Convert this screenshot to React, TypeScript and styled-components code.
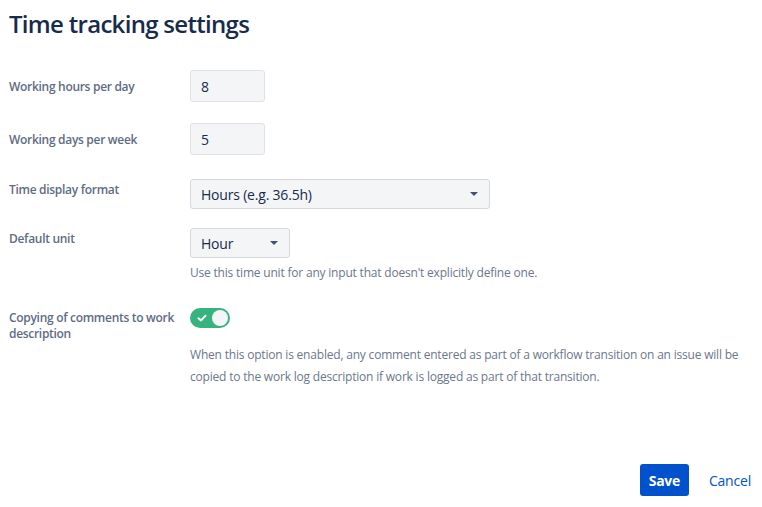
import React from "react";
import styled, { createGlobalStyle } from "styled-components";

const Global = createGlobalStyle`
  html, body { margin: 0; padding: 0; background: #fff; }
  body { font-family: "Open Sans", "Noto Sans", sans-serif; color: #172b4d; }
  * { box-sizing: border-box; }
`;

const Page = styled.div`
  width: 762px;
  height: 507px;
  padding: 10px 9px 0 9px;
  display: flex;
  flex-direction: column;
`;

const Title = styled.h1`
  margin: 0;
  font-size: 24px;
  line-height: 28px;
  font-weight: 600;
  color: #172b4d;
  letter-spacing: -0.7px;
`;

const Form = styled.div`
  margin-top: 32px;
  display: grid;
  grid-template-columns: 181px 1fr;
  align-items: start;
`;

const Label = styled.div<{ $top: number; $mt: number }>`
  padding-top: ${(p) => p.$top}px;
  margin-top: ${(p) => p.$mt}px;
  font-size: 12px;
  line-height: 16px;
  font-weight: 600;
  color: #5e6c84;
  letter-spacing: -0.3px;
  width: 176px;
`;

const Field = styled.div<{ $mt: number }>`
  margin-top: ${(p) => p.$mt}px;
  display: flex;
  flex-direction: column;
  align-items: flex-start;
`;

const TextInput = styled.div`
  width: 75px;
  height: 32px;
  background: #f4f5f7;
  border: 1px solid #dfe1e6;
  border-radius: 3px;
  padding: 0 10px;
  display: flex;
  align-items: center;
  font-size: 14px;
  color: #172b4d;
`;

const Select = styled.div<{ $w: number }>`
  width: ${(p) => p.$w}px;
  height: 30px;
  background: #f4f5f7;
  border: 1px solid #d5d8de;
  border-radius: 3px;
  padding: 0 10px;
  display: flex;
  align-items: center;
  justify-content: space-between;
  font-size: 14px;
  letter-spacing: -0.2px;
  color: #172b4d;
`;

const Caret = styled.span`
  width: 0;
  height: 0;
  border-left: 4px solid transparent;
  border-right: 4px solid transparent;
  border-top: 4px solid #42526e;
  margin-right: 1px;
`;

const Help = styled.p<{ $mt: number; $lh: number }>`
  margin: ${(p) => p.$mt}px 0 0 0;
  font-size: 12px;
  line-height: ${(p) => p.$lh}px;
  color: #6b778c;
  letter-spacing: -0.2px;
  max-width: 560px;
`;

const Toggle = styled.div`
  width: 40px;
  height: 20px;
  border-radius: 10px;
  background: #36b37e;
  position: relative;
  display: flex;
  align-items: center;
  padding: 0 2px 0 7px;
`;

const Knob = styled.span`
  position: absolute;
  right: 2px;
  top: 2px;
  width: 16px;
  height: 16px;
  border-radius: 50%;
  background: #f4f5f7;
`;

const Footer = styled.div`
  margin-top: auto;
  margin-bottom: 11px;
  margin-right: -8px;
  display: flex;
  justify-content: flex-end;
  align-items: center;
  gap: 10px;
`;

const Primary = styled.button`
  height: 32px;
  width: 49px;
  padding: 0;
  border: none;
  border-radius: 3px;
  background: #0052cc;
  color: #fff;
  font-family: inherit;
  font-size: 14px;
  font-weight: 700;
  letter-spacing: -0.3px;
`;

const Link = styled.button`
  height: 32px;
  padding: 0 10px;
  border: none;
  background: transparent;
  color: #0052cc;
  font-family: inherit;
  font-size: 14px;
  letter-spacing: -0.2px;
`;

export default function App() {
  return (
    <>
      <Global />
      <Page>
        <Title>Time tracking settings</Title>
        <Form>
          <Label $top={9} $mt={0}>Working hours per day</Label>
          <Field $mt={0}>
            <TextInput>8</TextInput>
          </Field>

          <Label $top={9} $mt={21}>Working days per week</Label>
          <Field $mt={21}>
            <TextInput>5</TextInput>
          </Field>

          <Label $top={3} $mt={24}>Time display format</Label>
          <Field $mt={24}>
            <Select $w={300}>
              <span>Hours (e.g. 36.5h)</span>
              <Caret />
            </Select>
          </Field>

          <Label $top={3} $mt={19}>Default unit</Label>
          <Field $mt={19}>
            <Select $w={100}>
              <span>Hour</span>
              <Caret />
            </Select>
            <Help $mt={7} $lh={16}>
              Use this time unit for any input that doesn't explicitly define one.
            </Help>
          </Field>

          <Label $top={2} $mt={27}>Copying of comments to work description</Label>
          <Field $mt={27}>
            <Toggle>
              <svg width="10" height="10" viewBox="0 0 10 10">
                <path d="M1.5 5.2 L4 7.4 L8.5 2.8" fill="none" stroke="#fff" strokeWidth="2" strokeLinecap="round" strokeLinejoin="round" />
              </svg>
              <Knob />
            </Toggle>
            <Help $mt={16} $lh={22}>
              When this option is enabled, any comment entered as part of a workflow transition on an issue will be
              copied to the work log description if work is logged as part of that transition.
            </Help>
          </Field>
        </Form>
        <Footer>
          <Primary>Save</Primary>
          <Link>Cancel</Link>
        </Footer>
      </Page>
    </>
  );
}
